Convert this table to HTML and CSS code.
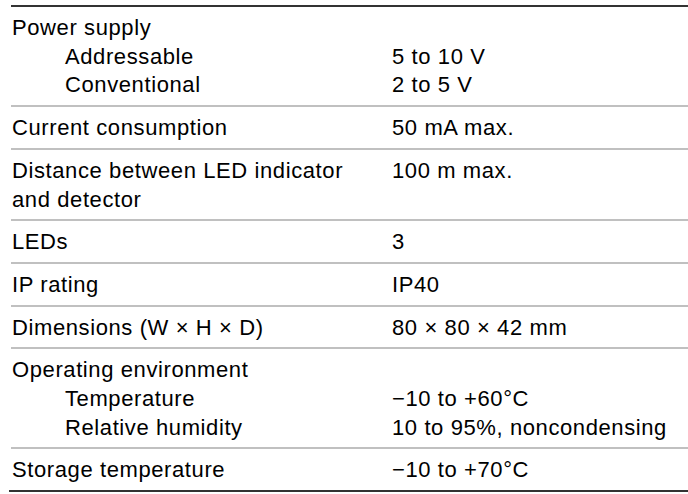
FILE: index.html
```html
<!DOCTYPE html>
<html lang="en">
<head>
<meta charset="utf-8">
<title>Specifications</title>
<link rel="stylesheet" href="styles.css">
</head>
<body>
<div class="spec">
  <div class="row">
    <div class="label">Power supply<div class="sub">Addressable</div><div class="sub">Conventional</div></div>
    <div class="value"><div>&nbsp;</div><div>5 to 10 V</div><div>2 to 5 V</div></div>
  </div>
  <div class="row">
    <div class="label">Current consumption</div>
    <div class="value">50 mA max.</div>
  </div>
  <div class="row">
    <div class="label">Distance between LED indicator<br>and detector</div>
    <div class="value">100 m max.</div>
  </div>
  <div class="row">
    <div class="label">LEDs</div>
    <div class="value">3</div>
  </div>
  <div class="row">
    <div class="label">IP rating</div>
    <div class="value">IP40</div>
  </div>
  <div class="row">
    <div class="label">Dimensions (W × H × D)</div>
    <div class="value">80 × 80 × 42 mm</div>
  </div>
  <div class="row">
    <div class="label">Operating environment<div class="sub">Temperature</div><div class="sub">Relative humidity</div></div>
    <div class="value"><div>&nbsp;</div><div>−10 to +60°C</div><div>10 to 95%, noncondensing</div></div>
  </div>
  <div class="row last">
    <div class="label">Storage temperature</div>
    <div class="value">−10 to +70°C</div>
  </div>
</div>
</body>
</html>
```
FILE: styles.css
```css
html, body {
  margin: 0;
  padding: 0;
  background: #ffffff;
}
body {
  font-family: "Liberation Sans", Arial, sans-serif;
  font-size: 22px;
  letter-spacing: 0.6px;
  line-height: 28.7px;
  color: #000000;
}
.spec {
  margin: 5px 0 0 11px;
  border-top: 2px solid #333333;
}
.row {
  display: grid;
  grid-template-columns: 381px 1fr;
  padding: 7px 0 5px 0;
  border-bottom: 2px solid #c0c0c0;
  white-space: nowrap;
}
.row.last {
  border-bottom-color: #333333;
  margin-left: -2px;
  padding-left: 2px;
}
.label {
  padding-left: 1px;
}
.sub {
  padding-left: 53px;
}
```
